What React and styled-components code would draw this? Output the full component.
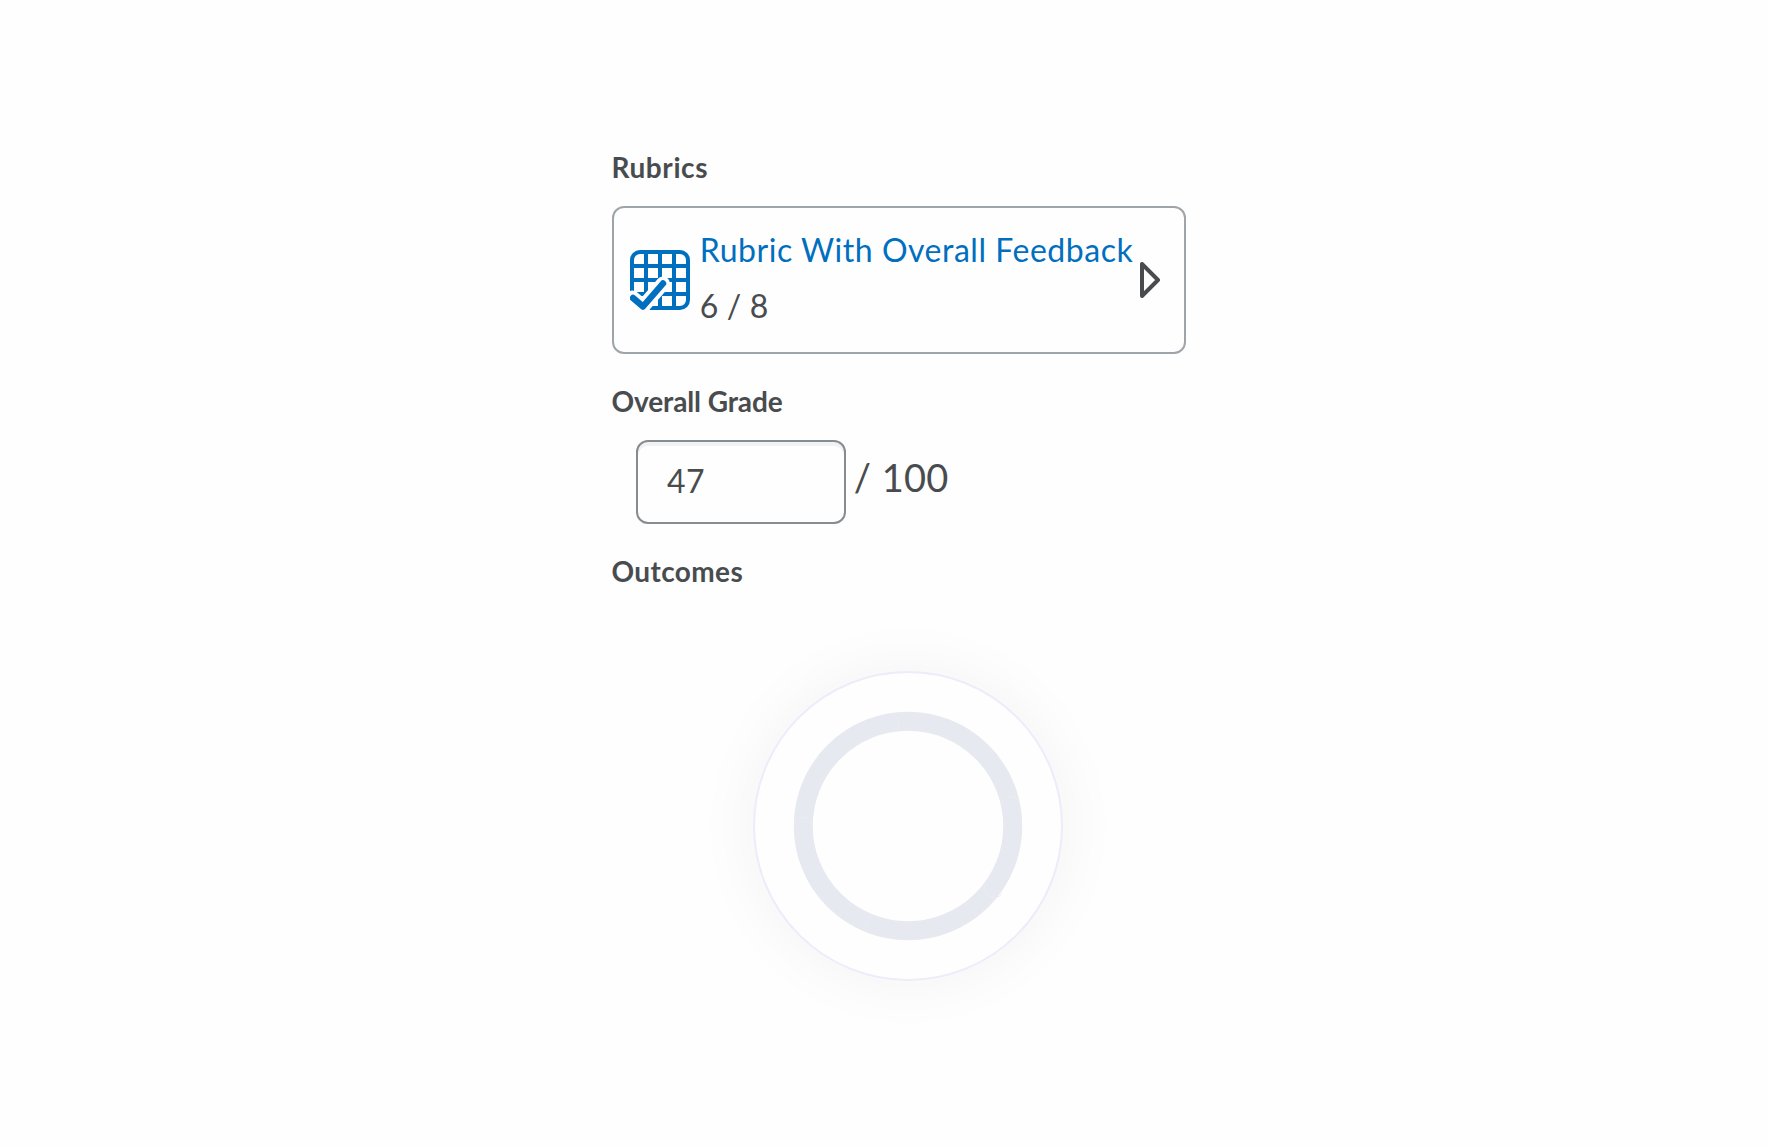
import React from "react";
import styled, { createGlobalStyle } from "styled-components";

const GlobalStyle = createGlobalStyle`
  *, *::before, *::after { box-sizing: border-box; }
  body {
    margin: 0;
    background: #fefefe;
    color: #494c4e;
    font-family: Lato, "Liberation Sans", sans-serif;
  }
`;

const Page = styled.main`
  display: flex;
  flex-direction: column;
  width: 574px;
  min-height: 1146px;
  margin-left: 612px;
  padding-top: 149px;
`;

const Heading = styled.h2`
  margin: ${(p) => p.$top || 0}px 0 0 -0.6px;
  height: 36px;
  font-size: 28px;
  line-height: 36px;
  font-weight: 700;
  letter-spacing: ${(p) => p.$spacing}px;
`;

const RubricCard = styled.section`
  display: flex;
  align-items: center;
  height: 148px;
  margin-top: 21px;
  padding: 0 24px 0 16px;
  border: 2px solid #9ea5a9;
  border-radius: 12px;
  background: #fefefe;
`;

const GridIcon = styled.svg`
  flex: none;
  width: 60px;
  height: 60px;
`;

const RubricText = styled.div`
  flex: 1;
  min-width: 0;
  margin: -4px 0 0 9.8px;
  font-size: 32px;
  line-height: 56px;
  letter-spacing: 0.53px;
  white-space: nowrap;
`;

const RubricLink = styled.a`
  display: block;
  color: #006fbf;
`;

const Score = styled.div`
  word-spacing: -0.8px;
`;

const Arrow = styled.svg`
  flex: none;
  width: 20px;
  height: 36px;
`;

const GradeRow = styled.div`
  display: flex;
  align-items: center;
  margin: 21px 0 0 24px;
  height: 84px;
`;

const GradeInput = styled.input`
  width: 210px;
  height: 84px;
  padding: 0 29px 4px;
  border: 2px solid #868c8f;
  border-radius: 12px;
  outline: none;
  background: #fefefe;
  box-shadow: inset 0 4px 0 #f1f2f3;
  color: inherit;
  font: 400 32px Lato, "Liberation Sans", sans-serif;
  letter-spacing: 0.4px;
`;

const OutOf = styled.span`
  margin: -10px 0 0 7.7px;
  font-size: 38px;
  line-height: 46px;
  letter-spacing: 0.3px;
  word-spacing: 0.5px;
`;

const Dial = styled.div`
  display: grid;
  place-items: center;
  width: 310px;
  height: 310px;
  margin: 82px 0 0 141px;
  border: 2px solid #eeebfa;
  border-radius: 50%;
  background: #fefefe;
  box-shadow: 0 0 64px rgba(0, 0, 0, 0.05);
`;

const seams = [
  "M97.7 3A9.5 9.500 0 0 1 100.300 21",
  "M209.300 93.700A9.500 9.500 0 0 1 226 89.300",
  "M193 172A9.500 9.500 0 0 0 208.700 182.700",
  "M79.300 205.300A9.500 9.500 0 0 0 77 222.700",
  "M1.700 112A9.500 9.500 0 0 1 19.700 114",
];

export default function App() {
  return (
    <>
      <GlobalStyle />
      <Page>
        <Heading $spacing={0.6}>Rubrics</Heading>
        <RubricCard>
          <GridIcon viewBox="0 0 60 60" fill="none">
            <rect x="2" y="2" width="56" height="56" rx="8" stroke="#006fbf" strokeWidth="4" />
            <path d="M16 2v56M30 2v56M44 2v56M2 16h56M2 30h56M2 44h56" stroke="#006fbf" strokeWidth="4" />
            <path d="M0 41L13 54L20 60H0z" fill="#fefefe" />
            <path d="M2.5 47.5L13 56.5L33 33.5" stroke="#fefefe" strokeWidth="14" strokeLinecap="round" strokeLinejoin="round" />
            <path d="M3 48l10 8.5L33 33.5" stroke="#006fbf" strokeWidth="6.4" strokeLinecap="round" strokeLinejoin="round" />
          </GridIcon>
          <RubricText>
            <RubricLink>Rubric With Overall Feedback</RubricLink>
            <Score>6 / 8</Score>
          </RubricText>
          <Arrow viewBox="0 0 20 36" fill="none">
            <path d="M2 2v32L18 18z" stroke="#494c4e" strokeWidth="4" strokeLinejoin="round" />
          </Arrow>
        </RubricCard>
        <Heading $top={29} $spacing={-0.1}>Overall Grade</Heading>
        <GradeRow>
          <GradeInput defaultValue="47" aria-label="Overall Grade" />
          <OutOf>/ 100</OutOf>
        </GradeRow>
        <Heading $top={29} $spacing={0.4}>Outcomes</Heading>
        <Dial>
          <svg width="230" height="230" viewBox="0 0 230 230" fill="none">
            <circle cx="115" cy="115" r="104.75" stroke="#e6e9f0" strokeWidth="19" />
            {seams.map((d) => (
              <path key={d} d={d} stroke="#ebedf1" strokeWidth="1" />
            ))}
          </svg>
        </Dial>
      </Page>
    </>
  );
}
